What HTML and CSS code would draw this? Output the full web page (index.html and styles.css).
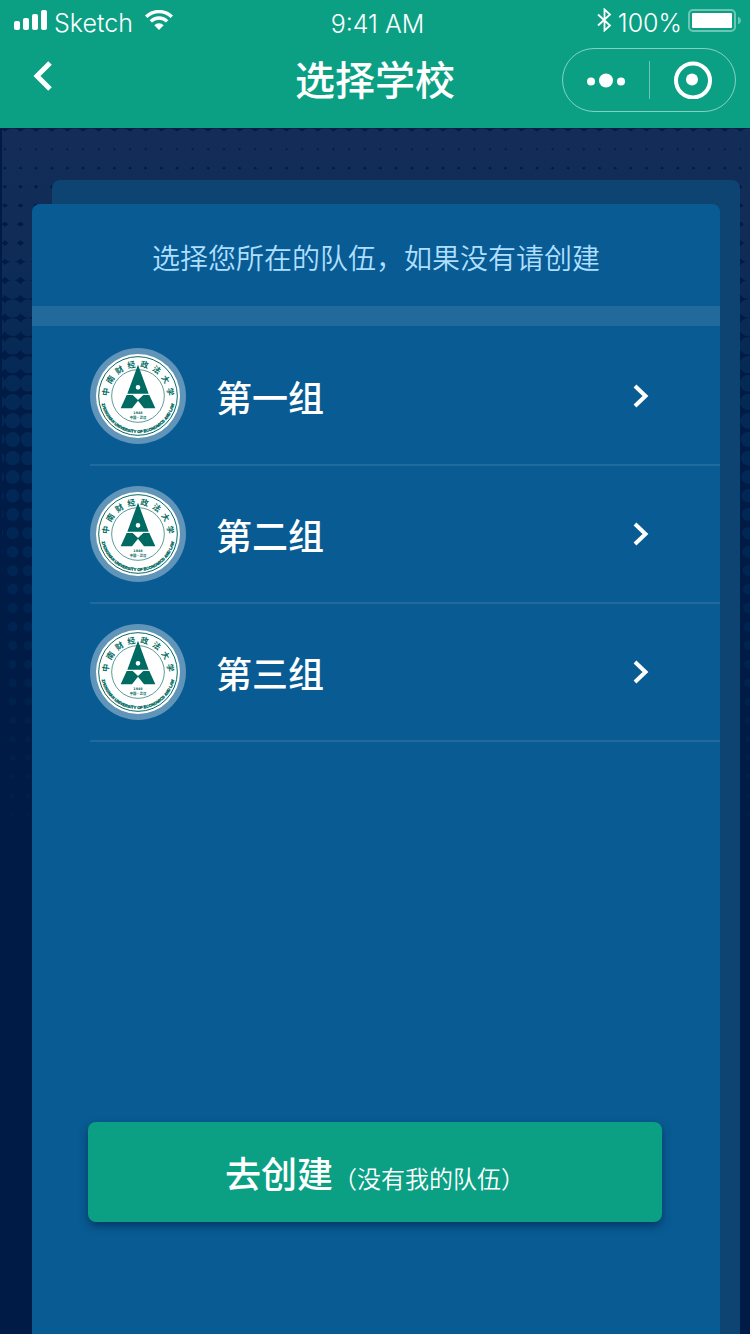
FILE: index.html
```html
<!DOCTYPE html>
<html lang="zh-CN">
<head>
<meta charset="utf-8">
<meta name="viewport" content="width=device-width, initial-scale=1">
<title>选择学校</title>
<link rel="stylesheet" href="styles.css">
</head>
<body>
<svg class="defs" aria-hidden="true">
  <defs>
    <path id="arc-top" d="M56 159.500A89 89 0 1 1 232 159.500"/>
    <path id="arc-bottom" d="M33 144A111 111 0 0 0 255 144"/>
  </defs>
  <symbol id="seal" viewBox="0 0 288 288">
    <circle cx="144" cy="144" r="126" fill="#fff"/>
    <g fill="none" stroke="#0b6b62">
      <circle cx="144" cy="144" r="118" stroke-width="3"/>
      <circle cx="144" cy="144" r="79" stroke-width="2"/>
    </g>
    <g fill="#006b62">
      <path fill-rule="evenodd" d="M144 50L176 137H112ZM144 111a7 7 0 1 0 0 14a7 7 0 1 0 0-14Z"/>
      <path d="M110 141H128L144 156L160 141H178L196 181H162L144 158L126 181H92Z"/>
    </g>
  </symbol>
  <symbol id="chevron" viewBox="0 0 16 24">
    <path d="M2 2L12.500 12L2 22" fill="none" stroke="#fff" stroke-width="4"/>
  </symbol>
</svg>

<header class="topbar">
  <div class="status">
    <div class="status-left">
      <svg width="34" height="20" viewBox="0 0 34 20" fill="#fff" aria-hidden="true">
        <rect x="0" y="11" width="6" height="9" rx="2"/><rect x="9" y="8" width="6" height="12" rx="2"/><rect x="18" y="4" width="6" height="16" rx="2"/><rect x="27" y="0" width="6" height="20" rx="2"/>
      </svg>
      <span>Sketch</span>
      <svg class="wifi" width="28" height="20" viewBox="0 0 28 20" aria-hidden="true">
        <g fill="none" stroke="#fff" stroke-width="3.400"><path d="M1.200 6.800A18.200 18.200 0 0 1 26.800 6.800"/><path d="M5.800 11.400A11.700 11.700 0 0 1 22.200 11.400"/></g>
        <path d="M14 20L9.300 15.300A6.700 6.700 0 0 1 18.700 15.300Z" fill="#fff"/>
      </svg>
    </div>
    <span class="time">9:41 AM</span>
    <div class="status-right">
      <svg width="15" height="24" viewBox="0 0 15 24" aria-hidden="true"><path d="M1 6.500L13 17.500L7.500 22.500V1.500L13 6.500L1 17.500" fill="none" stroke="#fff" stroke-width="1.800"/></svg>
      <span>100%</span>
      <svg width="53" height="24" viewBox="0 0 53 24" aria-hidden="true">
        <rect x="1" y="2" width="46" height="21" rx="4" fill="none" stroke="#fff" stroke-opacity=".4" stroke-width="2"/>
        <rect x="4" y="5" width="40" height="15" rx="1" fill="#fff"/>
        <path d="M50 8.500Q53 10 53 12.500T50 16.500Z" fill="#fff" fill-opacity=".4"/>
      </svg>
    </div>
  </div>
  <div class="nav">
    <button class="back" type="button" aria-label="返回">
      <svg width="20" height="30" viewBox="0 0 20 30" aria-hidden="true"><path d="M17 2L4 15L17 28" fill="none" stroke="#fff" stroke-width="5"/></svg>
    </button>
    <h1>选择学校</h1>
    <div class="capsule">
      <button type="button" aria-label="更多">
        <svg width="38" height="38" viewBox="0 0 38 38" fill="#fff" aria-hidden="true"><circle cx="4" cy="20.500" r="4"/><circle cx="19" cy="19.500" r="7"/><circle cx="34" cy="20.500" r="4"/></svg>
      </button>
      <button type="button" aria-label="关闭">
        <svg width="38" height="38" viewBox="0 0 38 38" aria-hidden="true"><circle cx="19" cy="19.500" r="17" fill="none" stroke="#fff" stroke-width="4"/><circle cx="18" cy="18.500" r="6" fill="#fff"/></svg>
      </button>
    </div>
  </div>
</header>

<main>
  <svg class="dots" aria-hidden="true">
    <defs>
      <linearGradient id="fade" gradientUnits="userSpaceOnUse" x1="0" y1="0" x2="0" y2="700">
        <stop offset="0" stop-color="#132d58"/><stop offset=".15" stop-color="#102c57"/><stop offset=".32" stop-color="#062a55"/><stop offset=".55" stop-color="#002756"/><stop offset="1" stop-color="#001e48"/>
      </linearGradient>
    </defs>
    <g class="rows" stroke="url(#fade)">
      <path d="M-5 11.800H2000" stroke-width="22.800"/><path d="M-5 30.500H2000" stroke-width="22.300"/><path d="M-5 49.300H2000" stroke-width="21.800"/>
      <path d="M-5 68H2000" stroke-width="21.300"/><path d="M-5 86.700H2000" stroke-width="20.900"/><path d="M-5 105.500H2000" stroke-width="20.400"/>
      <path d="M-5 124.200H2000" stroke-width="20"/><path d="M-5 142.900H2000" stroke-width="19.500"/><path d="M-5 161.600H2000" stroke-width="19"/>
      <path d="M-5 180.400H2000" stroke-width="18.500"/><path d="M-5 199.100H2000" stroke-width="18.100"/><path d="M-5 217.800H2000" stroke-width="17.600"/>
      <path d="M-5 236.600H2000" stroke-width="17.100"/><path d="M-5 255.300H2000" stroke-width="16.600"/><path d="M-5 274H2000" stroke-width="16.100"/>
      <path d="M-5 292.800H2000" stroke-width="15.600"/><path d="M-5 311.500H2000" stroke-width="15"/><path d="M-5 330.200H2000" stroke-width="14.500"/>
      <path d="M-5 348.900H2000" stroke-width="13.900"/><path d="M-5 367.700H2000" stroke-width="13.400"/><path d="M-5 386.400H2000" stroke-width="12.800"/>
      <path d="M-5 405.100H2000" stroke-width="12.200"/><path d="M-5 423.900H2000" stroke-width="11.700"/><path d="M-5 442.600H2000" stroke-width="11.100"/>
      <path d="M-5 461.300H2000" stroke-width="10.600"/><path d="M-5 480H2000" stroke-width="10"/><path d="M-5 498.800H2000" stroke-width="9.500"/>
      <path d="M-5 517.500H2000" stroke-width="8.900"/><path d="M-5 536.200H2000" stroke-width="8.400"/><path d="M-5 555H2000" stroke-width="7.800"/>
      <path d="M-5 573.700H2000" stroke-width="7.300"/><path d="M-5 592.400H2000" stroke-width="6.700"/><path d="M-5 611.200H2000" stroke-width="6.100"/>
      <path d="M-5 629.900H2000" stroke-width="5.600"/><path d="M-5 648.600H2000" stroke-width="5"/><path d="M-5 667.400H2000" stroke-width="4.500"/><path d="M-5 686.100H2000" stroke-width="3.900"/>
    </g>
  </svg>
  <div class="stack">
    <div class="card-back"></div>
    <section class="card">
      <p class="hint">选择您所在的队伍，如果没有请创建</p>
      <ul class="teams">
        <li><a href="#team-1">
          <svg class="avatar" viewBox="0 0 288 288">
            <use href="#seal"/>
            <text class="seal-top"><textPath href="#arc-top" startOffset="50%">中&ensp;南&ensp;财&ensp;经&ensp;政&ensp;法&ensp;大&ensp;学</textPath></text>
            <text class="seal-bottom"><textPath href="#arc-bottom" startOffset="50%">ZHONGNAN UNIVERSITY OF ECONOMICS AND LAW</textPath></text>
            <text class="seal-year" x="144" y="197">1948</text>
            <text class="seal-place" x="144" y="214">中国·武汉</text>
          </svg>
          <span class="name">第一组</span><svg class="arrow"><use href="#chevron"/></svg>
        </a></li>
        <li><a href="#team-2">
          <svg class="avatar" viewBox="0 0 288 288">
            <use href="#seal"/>
            <text class="seal-top"><textPath href="#arc-top" startOffset="50%">中&ensp;南&ensp;财&ensp;经&ensp;政&ensp;法&ensp;大&ensp;学</textPath></text>
            <text class="seal-bottom"><textPath href="#arc-bottom" startOffset="50%">ZHONGNAN UNIVERSITY OF ECONOMICS AND LAW</textPath></text>
            <text class="seal-year" x="144" y="197">1948</text>
            <text class="seal-place" x="144" y="214">中国·武汉</text>
          </svg>
          <span class="name">第二组</span><svg class="arrow"><use href="#chevron"/></svg>
        </a></li>
        <li><a href="#team-3">
          <svg class="avatar" viewBox="0 0 288 288">
            <use href="#seal"/>
            <text class="seal-top"><textPath href="#arc-top" startOffset="50%">中&ensp;南&ensp;财&ensp;经&ensp;政&ensp;法&ensp;大&ensp;学</textPath></text>
            <text class="seal-bottom"><textPath href="#arc-bottom" startOffset="50%">ZHONGNAN UNIVERSITY OF ECONOMICS AND LAW</textPath></text>
            <text class="seal-year" x="144" y="197">1948</text>
            <text class="seal-place" x="144" y="214">中国·武汉</text>
          </svg>
          <span class="name">第三组</span><svg class="arrow"><use href="#chevron"/></svg>
        </a></li>
      </ul>
      <button class="create" type="button">去创建<small>（没有我的队伍）</small></button>
    </section>
  </div>
</main>
</body>
</html>
```

FILE: styles.css
```css
* {
  box-sizing: border-box;
}

body {
  margin: 0;
  min-height: 100vh;
  display: flex;
  flex-direction: column;
  background: #001c46;
  color: #fff;
  font-family: "Noto Sans CJK SC", sans-serif;
}

button {
  padding: 0;
  border: 0;
  background: none;
  color: inherit;
  font: inherit;
  cursor: pointer;
}

svg {
  display: block;
  flex: none;
}

.defs {
  position: absolute;
  width: 0;
  height: 0;
}

.topbar {
  background: #0ba084;
  padding-bottom: 16px;
}

.status,
.nav {
  display: grid;
  grid-template-columns: 1fr auto 1fr;
  align-items: center;
}

.status {
  height: 48px;
  padding: 0 9px 8px 14px;
  font-family: Inter, sans-serif;
  font-size: 25px;
  font-weight: 300;
  line-height: 32px;
}

.time {
  padding-top: 8px;
}

.status-left,
.status-right {
  display: flex;
  align-items: center;
  gap: 6px;
}

.status-left span,
.status-right span {
  padding-top: 6px;
}

.wifi {
  margin-left: 6px;
}

.status-right {
  justify-content: flex-end;
}

.nav {
  height: 64px;
  padding: 0 14px;
}

.back {
  justify-self: start;
  width: 58px;
  height: 40px;
  display: grid;
  place-items: center;
  margin-bottom: 8px;
}

h1 {
  margin: 0;
  padding-bottom: 4px;
  font-size: 40px;
  font-weight: 500;
  line-height: 60px;
}

.capsule {
  justify-self: end;
  display: grid;
  grid-template-columns: 1fr 1fr;
  align-items: center;
  width: 174px;
  height: 64px;
  border: 1px solid rgba(255, 255, 255, .5);
  border-radius: 32px;
}

.capsule button {
  height: 38px;
  display: grid;
  place-items: center;
}

.capsule button + button {
  border-left: 1px solid rgba(255, 255, 255, .4);
}

main {
  flex: 1;
  position: relative;
  display: flex;
  padding: 52px 10px 0 32px;
}

.dots {
  position: absolute;
  top: 0;
  left: 2px;
  width: calc(100% - 2px);
  height: 100%;
}

.rows {
  stroke-linecap: round;
  stroke-dasharray: 0 15.65;
}

.stack {
  position: relative;
  flex: 1;
  display: grid;
}

.card-back,
.card {
  grid-area: 1 / 1;
  border-radius: 8px 8px 0 0;
}

.card-back {
  margin-left: 20px;
  background: #0d4472;
}

.card {
  display: flex;
  flex-direction: column;
  margin: 24px 20px 0 0;
  padding-bottom: 112px;
  background: #085c93;
}

.hint {
  margin: 0;
  padding: 32px 16px 28px;
  border-bottom: 20px solid #226a9c;
  color: #aedfff;
  font-size: 28px;
  font-weight: 350;
  line-height: 42px;
  text-align: center;
}

.teams {
  margin: 0 0 32px;
  padding: 2px 0 0 58px;
  list-style: none;
}

.teams a {
  display: flex;
  align-items: center;
  padding: 20px 71px 20px 0;
  border-bottom: 2px solid #226a9c;
  color: inherit;
  text-decoration: none;
}

.avatar {
  width: 96px;
  height: 96px;
  border-radius: 50%;
  background: #6094b9;
  fill: #006b62;
  font-weight: 700;
  text-anchor: middle;
}

.name {
  flex: 1;
  padding-left: 30px;
  font-size: 36px;
  font-weight: 500;
  line-height: 52px;
}

.arrow {
  width: 16px;
  height: 24px;
}

.seal-top {
  font-size: 24px;
}

.seal-bottom {
  font-family: "Liberation Sans", sans-serif;
  font-size: 12px;
  stroke: #006b62;
  stroke-width: 1px;
}

.seal-year {
  font-family: "DejaVu Sans", sans-serif;
  font-size: 10px;
}

.seal-place {
  font-size: 10px;
}

.create {
  height: 100px;
  margin: auto 58px 0 56px;
  border-radius: 8px;
  background: #0ba084;
  box-shadow: 0 4px 8px rgba(0, 20, 60, .5);
  font-size: 36px;
  font-weight: 500;
}

.create small {
  font-size: 24px;
  font-weight: 350;
}
```
